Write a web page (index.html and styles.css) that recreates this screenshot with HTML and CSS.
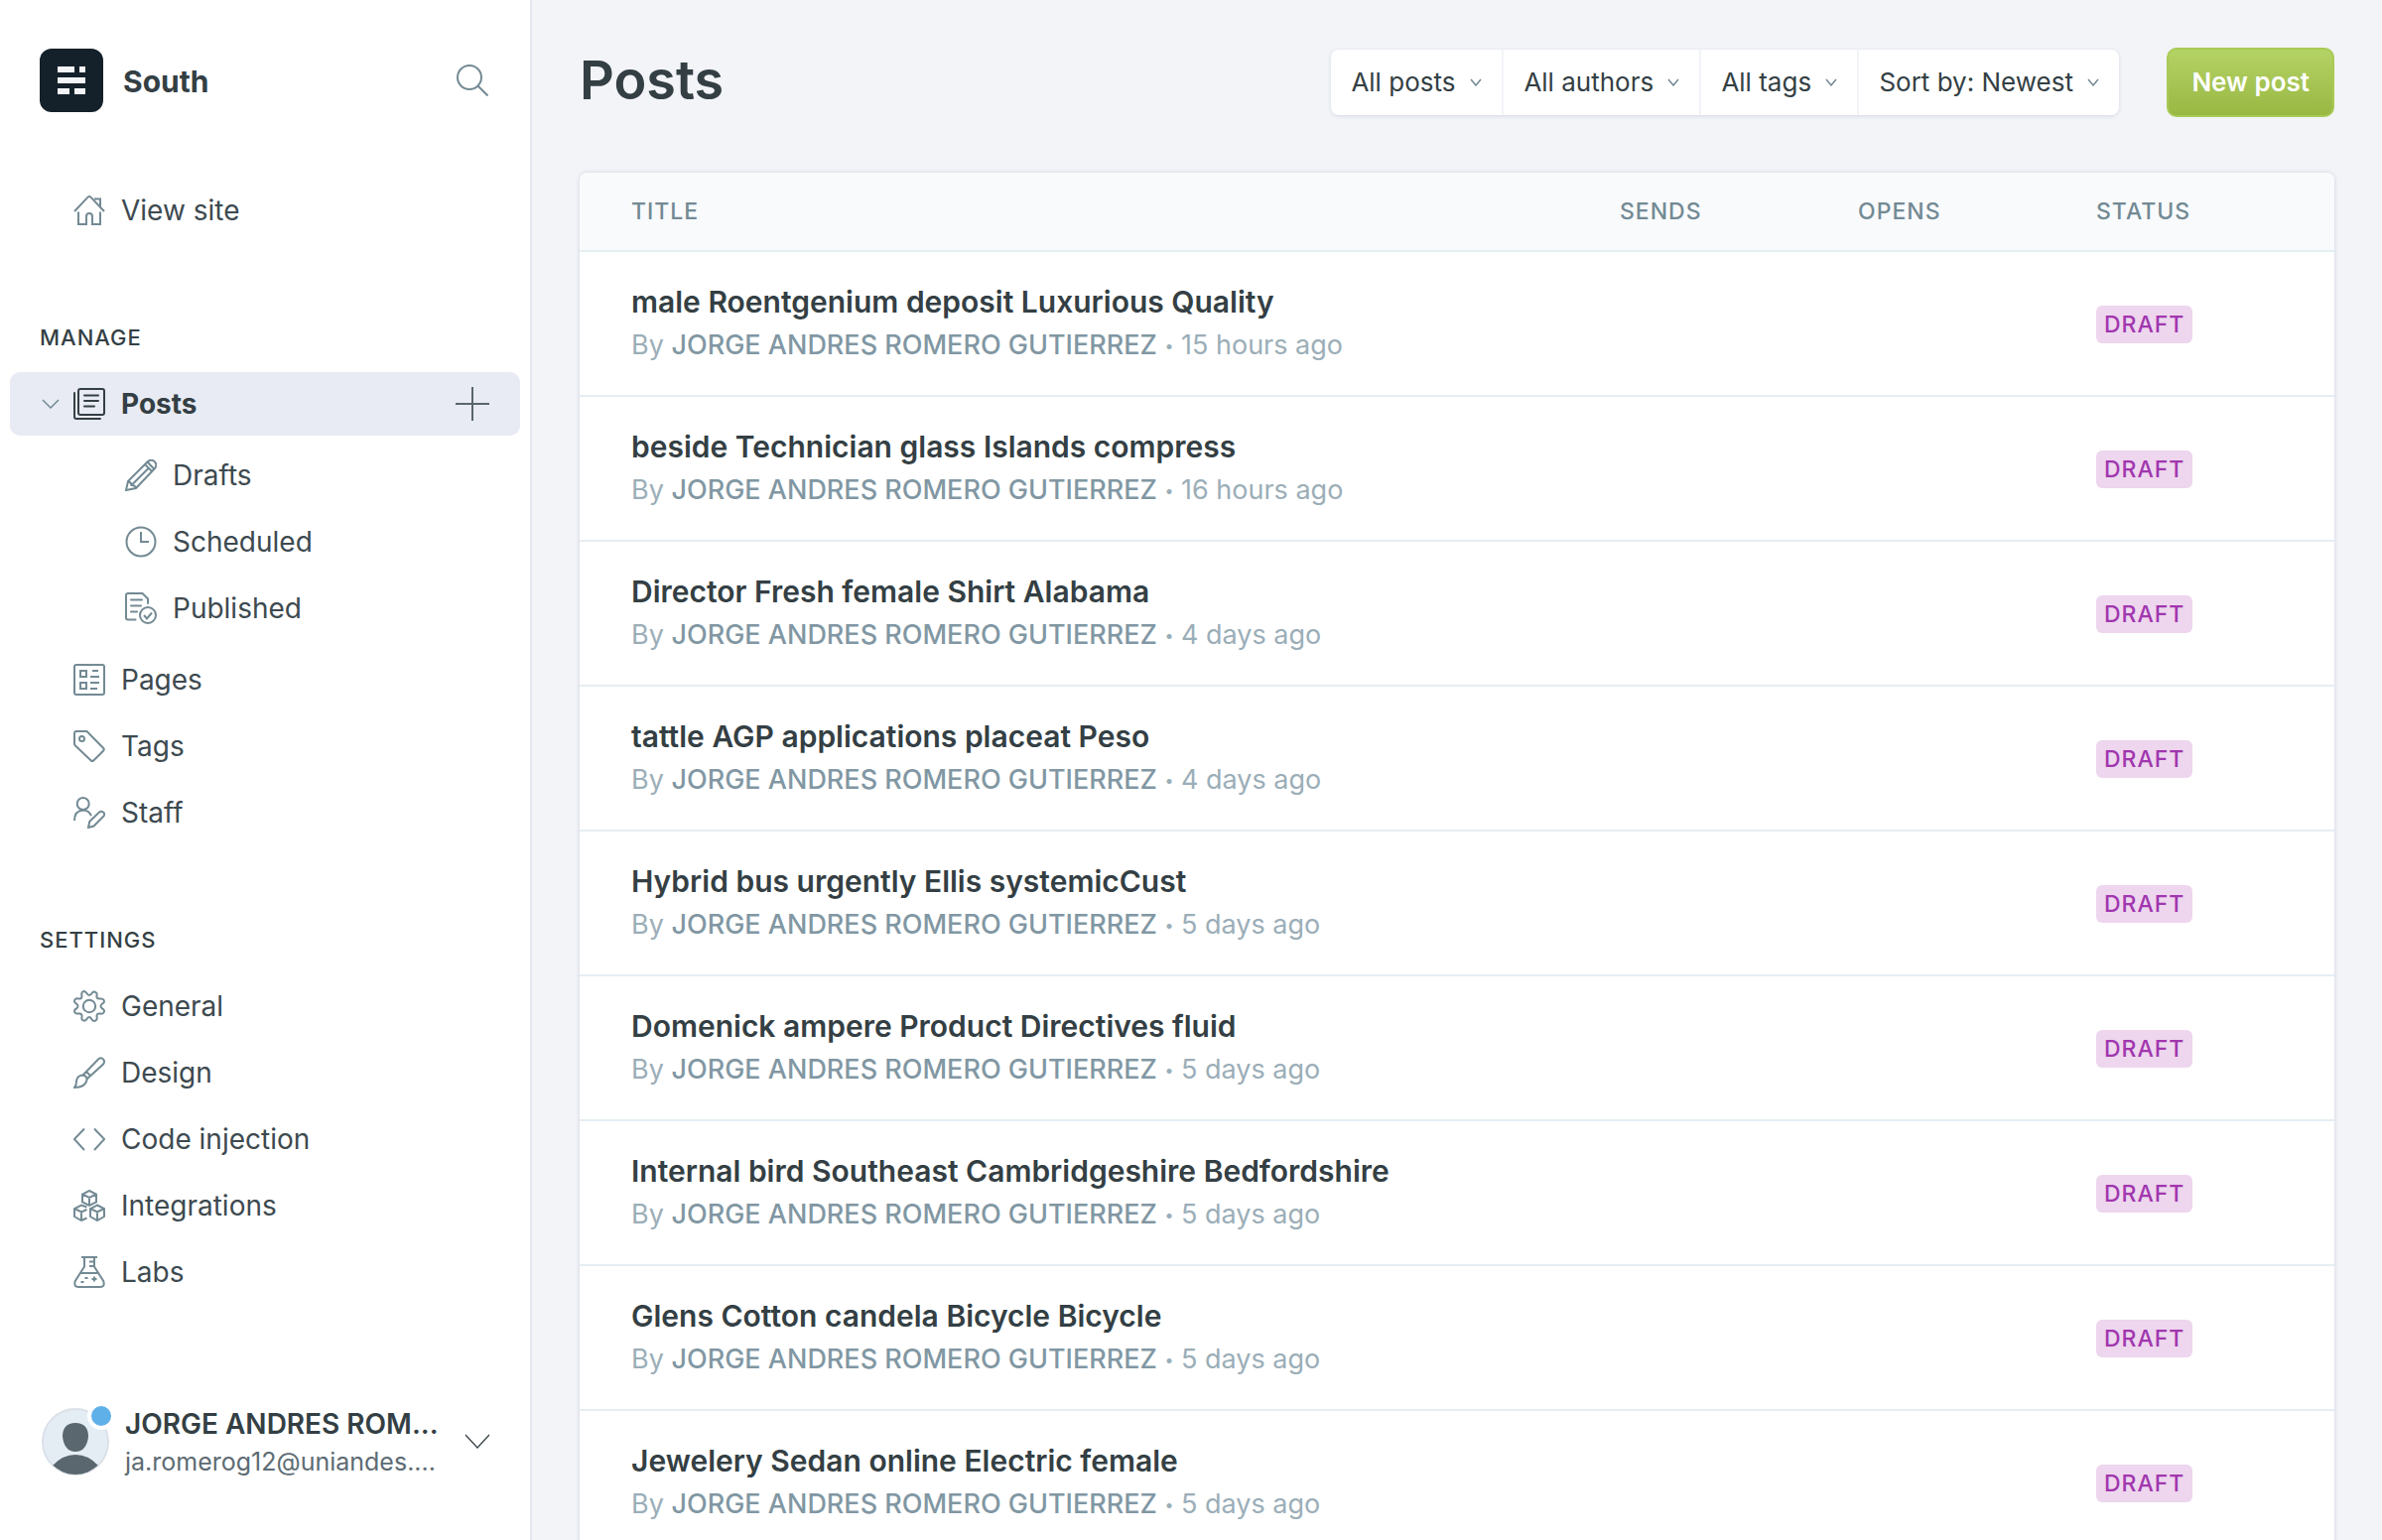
FILE: index.html
```html
<!DOCTYPE html>
<html lang="en">
<head>
<meta charset="utf-8">
<meta name="viewport" content="width=device-width, initial-scale=1">
<title>Posts - South</title>
<link rel="stylesheet" href="styles.css">
</head>
<body>
<div class="app">
  <aside class="sidebar">
    <header class="site">
      <svg class="site-logo" viewBox="0 0 64 64" aria-hidden="true"><rect width="64" height="64" rx="12" fill="#15212a"/><g fill="#f4f5f8"><path d="M18 18h17v6H18zM40 18h6v6h-6zM18 29h28v6H18zM18 40h12v6H18zM35 40h11v6H35z"/></g></svg>
      <span class="site-name">South</span>
      <button class="icon-button" type="button" aria-label="Search"><svg class="icon" viewBox="0 0 32 32"><circle cx="13" cy="13" r="12"/><path d="M21.5 21.5l10 10"/></svg></button>
    </header>
    <nav class="nav">
      <ul class="nav-list">
        <li><a class="nav-link" href="#site"><svg class="icon" viewBox="0 0 32 32"><path d="M1 17 14.6 2.6q1.4-1.4 2.8 0L31 17M21 4.500h6V13M5 17.500V30h8v-8q0-3 3-3t3 3v8h8V17.500"/></svg>View site</a></li>
      </ul>
      <h2 class="nav-title">Manage</h2>
      <ul class="nav-list">
        <li class="nav-current">
          <a class="nav-link active" href="#posts"><svg class="chevron" viewBox="0 0 18 10"><path d="M1 1l8 8 8-8"/></svg><svg class="icon" viewBox="0 0 32 32"><rect x="5" y="1" width="26" height="26" rx="2"/><path d="M1 5v24q0 2 2 2h24M11 7.500h14M11 13h14M11 18.500h10" stroke-linecap="round"/></svg>Posts</a>
          <button class="icon-button" type="button" aria-label="New post"><svg class="icon plus" viewBox="0 0 34 34"><path d="M17 0v34M0 17h34"/></svg></button>
        </li>
        <li>
          <ul class="nav-list nav-sub">
            <li><a class="nav-link" href="#drafts"><svg class="icon" viewBox="0 0 32 32"><path d="M1 31 3 22 22 3q4-4 7.500-1t.5 7L11 29zM3 22.500q3 0 3.500 3.500 4 0 4.500 3M20 5l7.500 7.500M22.500 2.500l7 7.500M6.500 26 24 8.500"/></svg>Drafts</a></li>
            <li><a class="nav-link" href="#scheduled"><svg class="icon" viewBox="0 0 32 32"><circle cx="16" cy="16" r="14.500"/><path d="M16 6v10h8"/></svg>Scheduled</a></li>
            <li><a class="nav-link" href="#published"><svg class="icon" viewBox="0 0 32 32"><path d="M10.500 27.500H3q-2 0-2-2V3q0-2 2-2h14.500L23 6.500V11M6 7.500h11M6 13.500h10M6 19.500h6" stroke-linecap="round"/><circle cx="23" cy="23" r="8"/><path d="M19 23l3 3.500 5-6"/></svg>Published</a></li>
          </ul>
        </li>
        <li><a class="nav-link" href="#pages"><svg class="icon" viewBox="0 0 32 32"><rect x="1" y="1" width="30" height="30" rx="2"/><path d="M7 7h6v6H7zM7 19h6v6H7zM19 7h6M17 13h9M17 19h9M17 25h7"/></svg>Pages</a></li>
        <li><a class="nav-link" href="#tags"><svg class="icon" viewBox="0 0 32 32"><path d="M1 3q0-2 2-2h10.500L30 17.700q1.500 1.500 0 3l-9.500 9.600q-1.500 1.500-3 0L2 15.500q-1-1-1-2z"/><circle cx="8.500" cy="8.500" r="2.500"/></svg>Tags</a></li>
        <li><a class="nav-link" href="#staff"><svg class="icon" viewBox="0 0 32 32"><circle cx="9.700" cy="7" r="6"/><path d="M1 24q0-10 8.700-10.500 5.800 0 8.300 5.500M15 31l1.200-6L26 15.500q2-1.500 4 0t.5 4L20.500 29.500z"/></svg>Staff</a></li>
      </ul>
      <h2 class="nav-title">Settings</h2>
      <ul class="nav-list">
        <li><a class="nav-link" href="#general"><svg class="icon" viewBox="0 0 32 32"><circle cx="16" cy="16" r="6.200"/><path d="M13 2.500q1.500 2.500 3 2.500t3-2.500q1.500-2 4 0 1 .7.500 3-.5 3 2.500 3 5-.5 5 3 0 1-2 2-1.500 1-1.500 2.500t1.500 2.500q3 1.500 1.500 4-.5 1.500-3.500 1-3.500-.5-3.500 2.500 1 4.500-2.500 5-1.500 0-2.500-1.500-1-2.500-2.500-2.500T13 29.500q-1.500 2-4 .500-1-1-.5-3 .5-3.500-2.500-3.500-5 .5-5-2.500 0-1.500 2-2.500 1.500-1 1.500-2.500T3 13.500q-3-1.500-1.500-4 .5-1.500 3.500-1 3.500.5 3.500-2.500-1-4.500 2-5 1.500 0 2.500 1.500z"/></svg>General</a></li>
        <li><a class="nav-link" href="#design"><svg class="icon" viewBox="0 0 32 32"><path d="M1 31q2-2 2-6 .5-6 6-6.500 5 .5 4.500 5Q12 31 1 31zM9.500 18.500 25 2.500q3-2.500 5 0 2 2 0 5L13.500 22.500M13 15l4 4"/></svg>Design</a></li>
        <li><a class="nav-link" href="#code"><svg class="icon" viewBox="0 0 32 32"><path d="M11 5.500.8 16 11 27M21 5.500 31.200 16 21 27"/></svg>Code injection</a></li>
        <li><a class="nav-link" href="#integrations"><svg class="icon" viewBox="0 0 32 32"><path d="M16 1l7 3.500v8L16 16l-7-3.500v-8zM9 4.500 16 8l7-3.500M16 8v8M13.500 17.500 8 15.500 1 19v8l7 4 5.500-2.500M1 19l7 3.500 5.500-2.500M8 22.500V31M24 15.500l7 3.500v8l-7 4-7-4v-8zM17 19l7 3.500 7-3.500M24 22.500V31"/></svg>Integrations</a></li>
        <li><a class="nav-link" href="#labs"><svg class="icon" viewBox="0 0 32 32"><path d="M8 1h16M11 1v9.500L1.800 25Q0 31 5 31h22q5 0 3.200-6L21 10.500V1M6.500 17h19M16 5.500h5M16 10h5M21 20.500v5M18.500 23h5M11.500 22h3M7.500 26h3"/></svg>Labs</a></li>
      </ul>
    </nav>
    <button class="account" type="button">
      <span class="avatar">
        <svg viewBox="0 0 68 68" aria-hidden="true"><defs><clipPath id="disc"><circle cx="34" cy="34" r="33"/></clipPath></defs><circle cx="34" cy="34" r="33" fill="#e5edf4" stroke="#dbe1e8" stroke-width="2"/><path d="M34 15q13 0 13 14-2 15-13 15T21 29q0-14 13-14zM11 58q10-11 23-11t23 11L34 74z" fill="#5a676e" clip-path="url(#disc)"/></svg>
        <span class="avatar-dot"></span>
      </span>
      <span class="account-text">
        <span class="account-name">JORGE ANDRES ROM...</span>
        <span class="account-email">ja.romerog12@uniandes....</span>
      </span>
      <svg class="account-chevron" viewBox="0 0 26 16"><path d="M1 1l12 13L25 1"/></svg>
    </button>
  </aside>

  <main class="main">
    <header class="toolbar">
      <h1 class="page-title">Posts</h1>
      <div class="filters">
        <label class="filter"><select aria-label="Post type"><option>All posts</option></select><svg viewBox="0 0 12 8"><path d="M1 1l5 6 5-6"/></svg></label>
        <label class="filter"><select aria-label="Author"><option>All authors</option></select><svg viewBox="0 0 12 8"><path d="M1 1l5 6 5-6"/></svg></label>
        <label class="filter"><select aria-label="Tag"><option>All tags</option></select><svg viewBox="0 0 12 8"><path d="M1 1l5 6 5-6"/></svg></label>
        <label class="filter"><select aria-label="Order"><option>Sort by: Newest</option></select><svg viewBox="0 0 12 8"><path d="M1 1l5 6 5-6"/></svg></label>
      </div>
      <button class="primary" type="button">New post</button>
    </header>

    <table class="posts">
      <thead>
        <tr><th>Title</th><th class="col">Sends</th><th class="col">Opens</th><th class="col">Status</th></tr>
      </thead>
      <tbody>
        <tr><td><h3>male Roentgenium deposit Luxurious Quality</h3><p>By <b>JORGE ANDRES ROMERO GUTIERREZ</b> <i>•</i> 15 hours ago</p></td><td></td><td></td><td><span class="badge">Draft</span></td></tr>
        <tr><td><h3>beside Technician glass Islands compress</h3><p>By <b>JORGE ANDRES ROMERO GUTIERREZ</b> <i>•</i> 16 hours ago</p></td><td></td><td></td><td><span class="badge">Draft</span></td></tr>
        <tr><td><h3>Director Fresh female Shirt Alabama</h3><p>By <b>JORGE ANDRES ROMERO GUTIERREZ</b> <i>•</i> 4 days ago</p></td><td></td><td></td><td><span class="badge">Draft</span></td></tr>
        <tr><td><h3>tattle AGP applications placeat Peso</h3><p>By <b>JORGE ANDRES ROMERO GUTIERREZ</b> <i>•</i> 4 days ago</p></td><td></td><td></td><td><span class="badge">Draft</span></td></tr>
        <tr><td><h3>Hybrid bus urgently Ellis systemicCust</h3><p>By <b>JORGE ANDRES ROMERO GUTIERREZ</b> <i>•</i> 5 days ago</p></td><td></td><td></td><td><span class="badge">Draft</span></td></tr>
        <tr><td><h3>Domenick ampere Product Directives fluid</h3><p>By <b>JORGE ANDRES ROMERO GUTIERREZ</b> <i>•</i> 5 days ago</p></td><td></td><td></td><td><span class="badge">Draft</span></td></tr>
        <tr><td><h3>Internal bird Southeast Cambridgeshire Bedfordshire</h3><p>By <b>JORGE ANDRES ROMERO GUTIERREZ</b> <i>•</i> 5 days ago</p></td><td></td><td></td><td><span class="badge">Draft</span></td></tr>
        <tr><td><h3>Glens Cotton candela Bicycle Bicycle</h3><p>By <b>JORGE ANDRES ROMERO GUTIERREZ</b> <i>•</i> 5 days ago</p></td><td></td><td></td><td><span class="badge">Draft</span></td></tr>
        <tr><td><h3>Jewelery Sedan online Electric female</h3><p>By <b>JORGE ANDRES ROMERO GUTIERREZ</b> <i>•</i> 5 days ago</p></td><td></td><td></td><td><span class="badge">Draft</span></td></tr>
      </tbody>
    </table>
  </main>
</div>
</body>
</html>
```

FILE: styles.css
```css
* {
  box-sizing: border-box;
}

body {
  margin: 0;
  color: #343f44;
  background: #f2f4f8;
  font: 400 28px/40px Inter, "Liberation Sans", sans-serif;
}

h1, h2, h3, p, ul {
  margin: 0;
  padding: 0;
}

button, select {
  border: 0;
  padding: 0;
  background: none;
  color: inherit;
  font: inherit;
  cursor: pointer;
}

.app {
  display: grid;
  grid-template-columns: 536px 1fr;
  height: 100vh;
  overflow: hidden;
}

/* Sidebar */

.sidebar {
  display: flex;
  flex-direction: column;
  min-height: 0;
  border-right: 2px solid #e4e7ee;
  background: #fff;
}

.site {
  display: flex;
  align-items: center;
  gap: 20px;
  padding: 49px 42px 0 40px;
}

.site-logo {
  width: 64px;
  height: 64px;
}

.site-name {
  flex: 1;
  padding-top: 2px;
  font-size: 30px;
  font-weight: 700;
}

.icon-button {
  display: flex;
}

.icon {
  width: 32px;
  height: 32px;
  flex: none;
  fill: none;
  stroke: #738a94;
  stroke-width: 2;
}

.plus {
  width: 34px;
  height: 34px;
  stroke: #59656d;
}

.nav {
  flex: 1;
  padding: 67px 10px 0;
}

.nav-list {
  list-style: none;
}

.nav-link {
  display: flex;
  align-items: center;
  gap: 16px;
  height: 64px;
  margin-bottom: 3px;
  padding-left: 64px;
  border-radius: 10px;
  color: #3d4a50;
  text-decoration: none;
}

.nav-sub {
  padding: 5px 0;
}

.nav-sub .nav-link {
  padding-left: 116px;
}

.nav-current {
  display: flex;
  align-items: center;
  height: 64px;
  margin-bottom: 3px;
  padding-right: 31px;
  border-radius: 10px;
  background: #e8ebf3;
}

.active {
  flex: 1;
  margin: 0;
  padding-left: 32px;
  gap: 14px;
  color: #343f44;
  font-weight: 700;
}

.active .icon {
  stroke: #343f44;
  margin-right: 2px;
}

.chevron {
  width: 18px;
  height: 10px;
  fill: none;
  stroke: #738a94;
  stroke-width: 1.5;
}

.nav-title {
  margin: 80px 0 19px 30px;
  font-size: 22px;
  font-weight: 500;
  line-height: 32px;
  letter-spacing: 1px;
  text-transform: uppercase;
}

.account {
  display: flex;
  align-items: center;
  gap: 16px;
  margin: 0 40px 61px 42px;
  text-align: left;
}

.avatar {
  position: relative;
  width: 68px;
  height: 68px;
  flex: none;
}

.avatar svg {
  display: block;
}

.avatar-dot {
  position: absolute;
  top: -6px;
  right: -6px;
  width: 28px;
  height: 28px;
  border: 4px solid #fff;
  border-radius: 50%;
  background: #5fb0e8;
}

.account-text {
  display: flex;
  flex: 1;
  flex-direction: column;
  min-width: 0;
  white-space: nowrap;
}

.account-name {
  font-weight: 600;
}

.account-email {
  color: #5d6b73;
  font-size: 25px;
  line-height: 36px;
}

.account-chevron {
  width: 26px;
  height: 16px;
  fill: none;
  stroke: #343f44;
  stroke-width: 1.2;
}

/* Posts screen */

.main {
  min-width: 0;
  padding: 48px 48px 0;
  overflow: auto;
  scrollbar-width: none;
}

.toolbar {
  display: flex;
  align-items: center;
  height: 70px;
  margin-bottom: 56px;
}

.page-title {
  flex: 1;
  padding-bottom: 4px;
  font-size: 54px;
  font-weight: 600;
  line-height: 64px;
}

.filters {
  display: flex;
  height: 66px;
  margin-right: 48px;
  border-radius: 8px;
  background: #fff;
  box-shadow: 0 1px 4px rgba(40, 60, 90, 0.14);
  font-size: 26px;
}

.filter {
  display: flex;
  align-items: center;
  gap: 14px;
  padding: 0 20px;
}

.filter + .filter {
  border-left: 2px solid #f2f4f8;
}

.filter select {
  height: 66px;
  appearance: none;
}

.filter svg {
  width: 12px;
  height: 8px;
  fill: none;
  stroke: #738a94;
  stroke-width: 1.5;
}

.primary {
  height: 70px;
  padding: 0 23px;
  border: 2px solid #a9ca55;
  border-radius: 10px;
  background: linear-gradient(#b4d365, #98b743);
  color: #fff;
  font-size: 26px;
  font-weight: 600;
}

.posts {
  width: 100%;
  border-collapse: separate;
  border-spacing: 0;
  border-radius: 8px;
  background: #fff;
  box-shadow: 0 0 4px rgba(40, 60, 90, 0.18);
  table-layout: fixed;
}

.posts th {
  height: 80px;
  padding: 0;
  border-bottom: 2px solid #e5eef3;
  background: #f9fafc;
  color: #738a94;
  font-size: 23px;
  font-weight: 500;
  letter-spacing: 1px;
  text-align: left;
  text-transform: uppercase;
}

.posts th:first-child {
  padding-left: 52px;
  border-top-left-radius: 8px;
}

.posts th:last-child {
  border-top-right-radius: 8px;
}

.posts .col {
  width: 240px;
}

.posts td {
  height: 146px;
  padding: 0 0 2px;
  border-bottom: 2px solid #e5eef3;
}

.posts td:first-child {
  padding-left: 52px;
}

.posts h3 {
  font-size: 30px;
  font-weight: 600;
  line-height: 46px;
}

.posts p {
  color: #9baeb8;
  font-size: 27px;
  line-height: 42px;
}

.posts b {
  color: #8197a3;
  font-weight: 500;
}

.posts i {
  font-size: 16px;
  font-style: normal;
  line-height: 1;
  vertical-align: 3px;
}

.badge {
  display: inline-block;
  padding: 0 8px;
  border-radius: 6px;
  background: #edd6ee;
  color: #a136ae;
  font-size: 23px;
  font-weight: 500;
  line-height: 38px;
  letter-spacing: 1px;
  text-transform: uppercase;
  vertical-align: middle;
}
```
